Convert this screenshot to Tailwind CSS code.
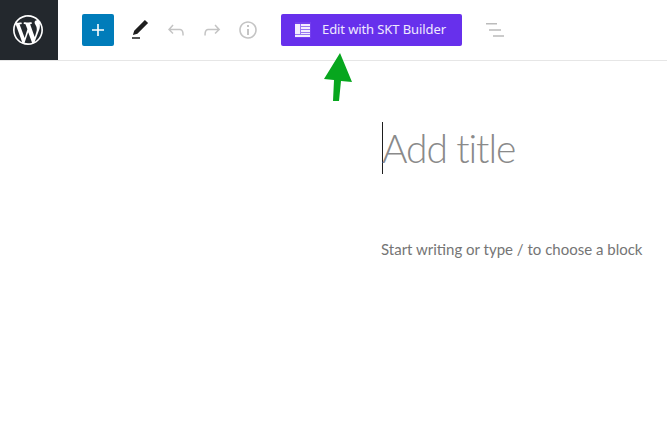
<!DOCTYPE html>
<html lang="en">
<head>
    <meta charset="UTF-8">
    <script src="https://cdn.jsdelivr.net/npm/@tailwindcss/browser@4"></script>
    <title>Editor</title>
</head>
<body class="bg-white font-['Noto_Sans',sans-serif] overflow-hidden">
    <div class="relative w-[667px] h-[436px]">
        <!-- top bar -->
        <header class="flex items-center h-[61px] border-b border-[#e6e6e6]">
            <div class="w-[58px] h-[60px] bg-[#23282d] flex items-center justify-center pr-0.5">
                <svg class="w-[30px] h-[30px]" viewBox="0 0 20 20" fill="#fff"><path d="M20 10c0-5.51-4.49-10-10-10C4.48 0 0 4.49 0 10c0 5.52 4.48 10 10 10 5.51 0 10-4.48 10-10zM7.78 15.37L4.37 6.22c.55-.02 1.17-.08 1.17-.08.5-.06.44-1.13-.06-1.11 0 0-1.45.11-2.37.11-.18 0-.37 0-.58-.01C4.12 2.69 6.87 1.11 10 1.11c2.33 0 4.45.87 6.05 2.34-.68-.11-1.65.39-1.65 1.58 0 .74.45 1.36.9 2.1.35.61.55 1.36.55 2.46 0 1.49-1.4 5-1.4 5l-3.03-8.37c.54-.02.82-.17.82-.17.5-.05.44-1.25-.06-1.22 0 0-1.44.12-2.38.12-.87 0-2.33-.12-2.33-.12-.5-.03-.56 1.2-.06 1.22l.92.08 1.26 3.41zM17.41 10c.24-.64.74-1.87.43-4.25.7 1.29 1.05 2.71 1.05 4.25 0 3.29-1.73 6.24-4.4 7.78.97-2.59 1.94-5.2 2.92-7.78zM6.1 18.09C3.12 16.65 1.11 13.53 1.11 10c0-1.3.23-2.48.72-3.59C3.25 10.3 4.67 14.2 6.1 18.09zm4.03-6.63l2.58 6.98c-.86.29-1.76.45-2.71.45-.79 0-1.57-.11-2.29-.33.81-2.38 1.62-4.74 2.42-7.1z"/></svg>
            </div>
            <button class="ml-6 w-8 h-8 bg-[#007cba] rounded-[2px] flex items-center justify-center">
                <svg class="w-6 h-6" viewBox="0 0 24 24" fill="#fff"><path d="M18 11.2h-5.2V6h-1.6v5.2H6v1.6h5.2V18h1.6v-5.2H18z"/></svg>
            </button>
            <button class="ml-2 w-9 h-9 flex items-center justify-center">
                <svg class="w-6 h-6" viewBox="0 0 24 24" fill="#1e1e1e"><path d="M20.1 5.1L16.9 2 6.2 12.7l-1.3 4.4 4.5-1.3L20.1 5.1zM4 20.8h8v-1.5H4v1.5z"/></svg>
            </button>
            <button class="w-9 h-9 flex items-center justify-center">
                <svg class="w-6 h-6" viewBox="0 0 24 24" fill="#c4c4c4"><path d="M18.3 11.7c-.6-.6-1.4-.9-2.3-.9H6.7l2.9-3.3-1.1-1-4.5 5L8.5 16l1-1-2.7-2.7H16c.5 0 .9.2 1.3.5 1 1 1 3.4 1 4.5v.3h1.5v-.2c0-1.5 0-4.3-1.5-5.7z"/></svg>
            </button>
            <button class="w-9 h-9 flex items-center justify-center">
                <svg class="w-6 h-6" viewBox="0 0 24 24" fill="#c4c4c4"><path d="M15.6 6.5l-1.1 1 2.9 3.3H8c-.9 0-1.7.3-2.3.9-1.4 1.5-1.4 4.2-1.4 5.6v.2h1.5v-.3c0-1.1 0-3.5 1-4.5.3-.3.7-.5 1.3-.5h9.2L14.5 15l1.1 1.1 4.6-4.6-4.6-5z"/></svg>
            </button>
            <button class="w-9 h-9 flex items-center justify-center">
                <svg class="w-6 h-6" viewBox="0 0 24 24" fill="#c4c4c4"><path d="M12 3.2c-4.8 0-8.8 3.9-8.8 8.8 0 4.8 3.9 8.8 8.8 8.8 4.8 0 8.8-3.9 8.8-8.8 0-4.8-4-8.8-8.8-8.8zm0 16c-4 0-7.2-3.3-7.2-7.2C4.8 8 8 4.8 12 4.8s7.2 3.3 7.2 7.2c0 4-3.2 7.2-7.2 7.2zM11 17h2v-6h-2v6zm0-8h2V7h-2v2z"/></svg>
            </button>
            <button class="ml-[15px] w-[181px] h-8 bg-[#6730ec] rounded-[2px] flex items-center pl-[14px] text-[13px] tracking-[-0.1px] text-white/90">
                <svg class="w-4 h-4 mr-[11px]" viewBox="0 0 16 16"><rect width="16" height="16" fill="#7440ee"/><rect y="2" width="15" height="13" fill="#f3eefe"/><rect x="5" y="2" width="1" height="10" fill="#9b78f2"/><rect x="6" y="4" width="9" height="1" fill="#9b78f2"/><rect x="6" y="7" width="9" height="1" fill="#9b78f2"/><rect x="6" y="10" width="9" height="1" fill="#9b78f2"/><rect y="12" width="15" height="1" fill="#9b78f2"/></svg>
                Edit with SKT Builder
            </button>
            <button class="ml-[15px] w-9 h-9 flex items-center justify-center">
                <svg class="w-6 h-6" viewBox="0 0 24 24" fill="#bbbbbb"><path d="M3 5h11v1.5H3zM6 11.2h12v1.5H6zM10 17.2h11v1.5H10z"/></svg>
            </button>
        </header>

        <!-- editor -->
        <main class="pl-[381px] pt-[61px] font-['Lato',sans-serif]">
            <div class="flex items-center h-[52px]">
                <span class="w-px h-[52px] bg-[#1e1e1e] ml-px"></span>
                <h1 class="text-[39px] tracking-[-1.1px] font-light text-[#8a8a8a] leading-[52px] -ml-px">Add title</h1>
            </div>
            <p class="mt-[64px] text-[15px] leading-[22px] text-[#757575]">Start writing or type / to choose a block</p>
        </main>

        <!-- green annotation arrow -->
        <svg class="absolute left-[320px] top-[50px] w-[36px] h-[54px]" viewBox="0 0 36 54" fill="#07a61e"><path d="M20 3L32 32 21 31 19 51 13 51 14 30 4 29z"/></svg>
    </div>
</body>
</html>
